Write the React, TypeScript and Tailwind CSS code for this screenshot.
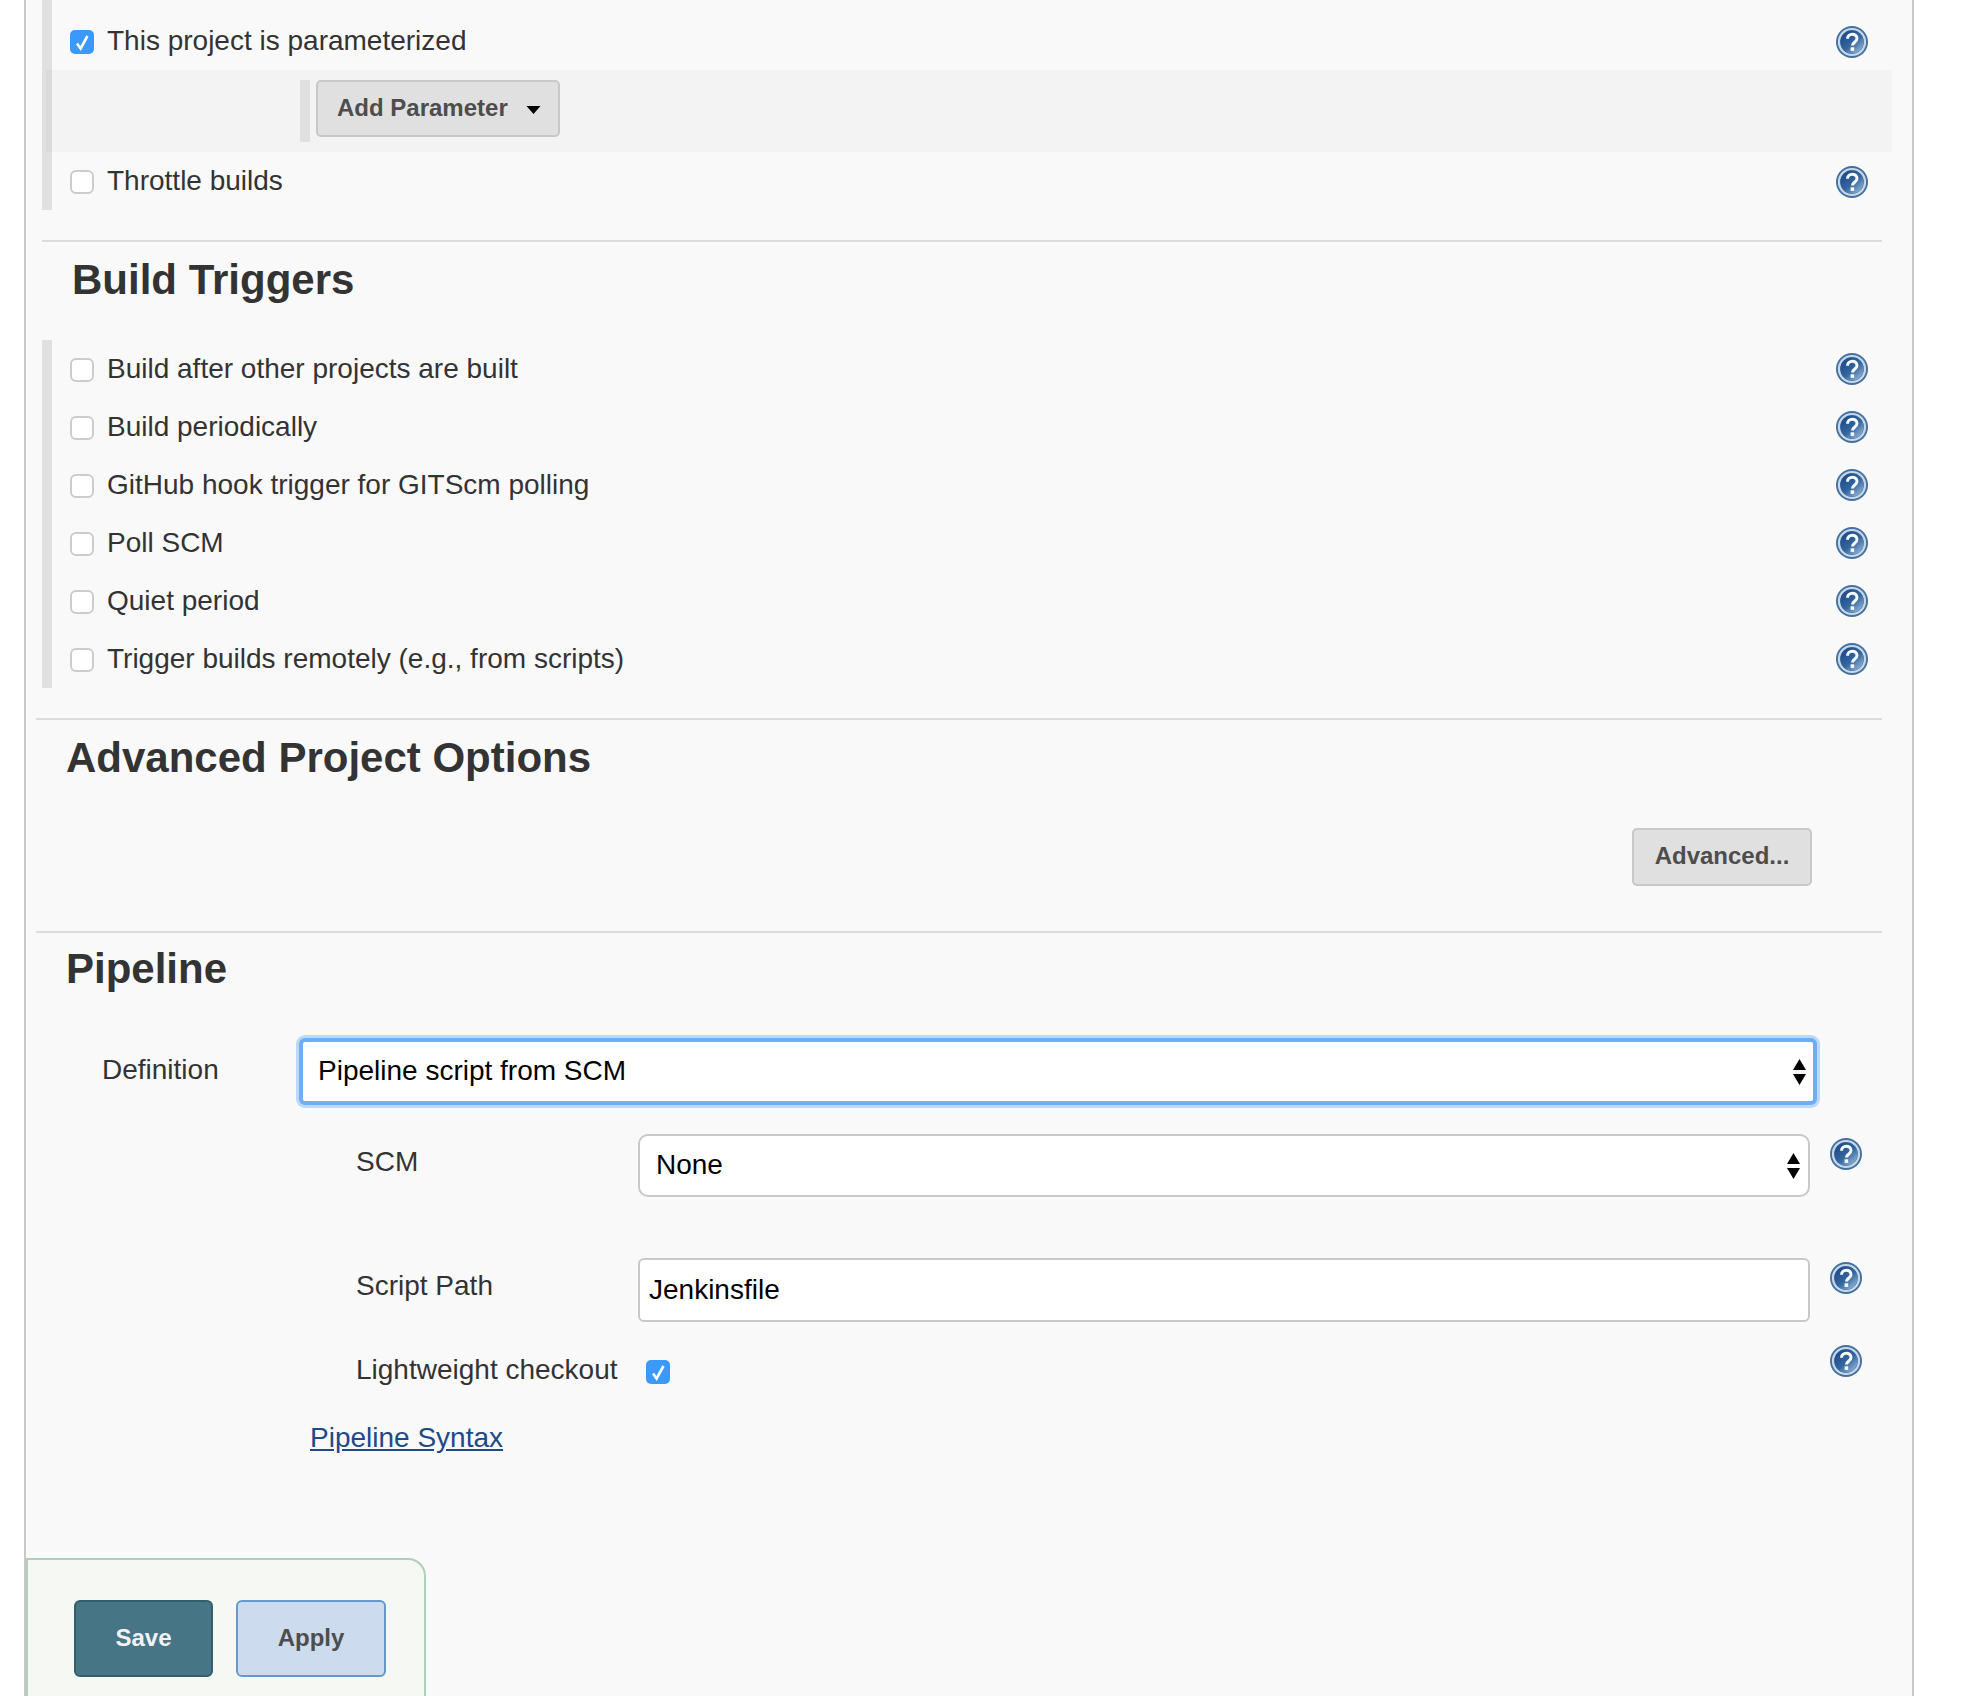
const triggers = [
  "Build after other projects are built",
  "Build periodically",
  "GitHub hook trigger for GITScm polling",
  "Poll SCM",
  "Quiet period",
  "Trigger builds remotely (e.g., from scripts)",
];

const HelpIcon = ({ id }: { id: string }) => (
  <svg viewBox="0 0 32 32" className="w-8 h-8 shrink-0 blur-[0.5px]">
    <defs>
      <linearGradient id={id} x1="0.15" y1="0.1" x2="0.85" y2="0.9">
        <stop offset="0" stopColor="#1f4c8c" />
        <stop offset="0.55" stopColor="#34669f" />
        <stop offset="1" stopColor="#8aaed3" />
      </linearGradient>
    </defs>
    <circle cx="16" cy="16" r="16" fill="#44719f" />
    <circle cx="16" cy="16" r="13" fill="none" stroke="#c9d8e8" strokeWidth="2.2" />
    <circle cx="16" cy="16" r="11.5" fill={`url(#${id})`} />
    <path d="M11.5 12.8c0-6 9.5-6 9.5-.3 0 3.6-4.6 3.8-4.6 7" fill="none" stroke="#f6f9fc" strokeWidth="3" />
    <rect x="14.6" y="21.3" width="3.6" height="3.6" fill="#f6f9fc" />
  </svg>
);

const CheckBox = ({ checked = false, className = "" }: { checked?: boolean; className?: string }) =>
  checked ? (
    <span className={`w-6 h-6 shrink-0 rounded-[5px] bg-[#3b99fc] ${className}`}>
      <svg viewBox="0 0 24 24" className="w-6 h-6">
        <path d="M7 13.5l3.6 5L17.5 6" fill="none" stroke="#fff" strokeWidth="2.6" />
      </svg>
    </span>
  ) : (
    <span className={`w-6 h-6 shrink-0 rounded-[6px] bg-white border-2 border-[#cccccc] ${className}`} />
  );

const SelectArrows = () => (
  <svg viewBox="0 0 13 26" className="w-[13px] h-[26px] shrink-0">
    <path d="M6.5 0L13 11H0zM6.5 26L0 15h13z" fill="#000" />
  </svg>
);

export default function App() {
  return (
    <div className="h-[1696px] overflow-hidden bg-white pl-6 font-['Liberation_Sans',Arial,sans-serif]">
      <div className="w-[1890px] h-full border-x-2 border-[#c8c8c8] bg-[#f9f9f9]">
        <div className="ml-4 w-[1850px] pr-6 h-[210px] border-l-[10px] border-[#e0e0e0]">
          <div className="flex items-center pl-[18px] h-[70px] pt-[14px]">
            <CheckBox checked />
            <span className="ml-[13px] -mt-[2px] flex-1 text-[28px] text-[#333]">This project is parameterized</span>
            <HelpIcon id="h0" />
          </div>
          <div className="-ml-[6px] -mr-6 h-[82px] bg-black/[0.025] flex items-start pt-[10px] pl-[254px]">
            <div className="w-[10px] h-[62px] bg-[#e0e0e0]" />
            <button className="ml-[6px] w-[244px] h-[57px] rounded-[5px] border-2 border-[#c8c8c8] bg-[#e0e0e0] text-[24px] font-bold text-[#4d4d4d] flex items-center pl-[19px] pb-[2px]">
              Add Parameter
              <svg viewBox="0 0 14 8" className="w-[15px] h-2 ml-[18px] mt-[5px]">
                <path d="M0 0h14L7 8z" fill="#000" />
              </svg>
            </button>
          </div>
          <div className="flex items-center pl-[18px] h-[60px]">
            <CheckBox />
            <span className="ml-[13px] -mt-[2px] flex-1 text-[28px] text-[#333]">Throttle builds</span>
            <HelpIcon id="h1" />
          </div>
        </div>

        <div className="ml-4 mt-[30px] w-[1840px] h-[100px] border-t-2 border-[#dcdcdc] pl-[30px] pt-[14px]">
          <h2 className="text-[42px] leading-[48px] font-bold text-[#333]">Build Triggers</h2>
        </div>
        <div className="ml-4 w-[1850px] pr-6 h-[348px] border-l-[10px] border-[#e0e0e0]">
          {triggers.map((t, i) => (
            <div key={t} className="flex items-center pl-[18px] h-[58px]">
              <CheckBox className="mt-[2px]" />
              <span className="ml-[13px] flex-1 text-[28px] text-[#333]">{t}</span>
              <HelpIcon id={`t${i}`} />
            </div>
          ))}
        </div>

        <div className="ml-[10px] mt-[30px] w-[1846px] h-[213px] border-t-2 border-[#dcdcdc] pl-[30px] pt-[14px]">
          <h2 className="text-[42px] leading-[48px] font-bold text-[#333]">Advanced Project Options</h2>
          <div className="flex justify-end pr-[70px] mt-[46px]">
            <button className="w-[180px] h-[58px] rounded-[5px] border-2 border-[#c8c8c8] bg-[#e0e0e0] text-[24px] font-bold text-[#4d4d4d] pb-[2px]">
              Advanced...
            </button>
          </div>
        </div>

        <div className="ml-[10px] w-[1846px] border-t-2 border-[#dcdcdc] pt-[12px]">
          <h2 className="pl-[30px] text-[42px] leading-[48px] font-bold text-[#333]">Pipeline</h2>

          <div className="mt-[45px] flex items-start">
            <span className="w-[263px] pl-[66px] mt-[10px] text-[28px] leading-[44px] text-[#333]">Definition</span>
            <div className="w-[1518px] h-[67px] rounded-[6px] border-[4px] border-[#6eaef5] bg-white ring-[3px] ring-[#bcd9fa] flex items-center pl-[15px] pr-[7px]">
              <span className="flex-1 pb-[2px] text-[28px] text-black">Pipeline script from SCM</span>
              <SelectArrows />
            </div>
          </div>

          <div className="mt-[29px] flex items-start">
            <span className="w-[320px]" />
            <span className="w-[282px] text-[28px] leading-[56px] text-[#333]">SCM</span>
            <div className="w-[1172px] h-[63px] rounded-[10px] border-2 border-[#c8c8c8] bg-white flex items-center pl-[16px] pr-[8px]">
              <span className="flex-1 pb-[2px] text-[28px] text-black">None</span>
              <SelectArrows />
            </div>
            <div className="ml-5 mt-1"><HelpIcon id="p0" /></div>
          </div>

          <div className="mt-[61px] flex items-start">
            <span className="w-[320px]" />
            <span className="w-[282px] text-[28px] leading-[56px] text-[#333]">Script Path</span>
            <input
              readOnly
              value="Jenkinsfile"
              className="w-[1172px] h-[64px] rounded-[6px] border-2 border-[#c8c8c8] bg-white px-[9px] text-[28px] text-black"
            />
            <div className="ml-5 mt-1"><HelpIcon id="p1" /></div>
          </div>

          <div className="mt-[24px] flex items-start">
            <span className="w-[320px]" />
            <span className="w-[290px] text-[28px] leading-[48px] text-[#333]">Lightweight checkout</span>
            <div className="mt-[14px]"><CheckBox checked className="block" /></div>
            <div className="ml-[1160px] -mt-[1px]"><HelpIcon id="p2" /></div>
          </div>

          <a href="#" className="block ml-[274px] mt-[24px] w-fit text-[28px] leading-[40px] text-[#204a87] underline">
            Pipeline Syntax
          </a>
        </div>

        <div className="mt-[100px] w-[400px] h-[200px] rounded-tr-[18px] border-t-2 border-x-2 border-[#b0cfbb] bg-[#f6f9f3] flex items-start gap-[23px] pl-[46px] pt-[40px]">
          <button className="w-[139px] h-[77px] rounded-[6px] border-2 border-[#335f6d] bg-[#467585] text-[24px] font-bold text-[#f2f2f2] pb-[2px]">
            Save
          </button>
          <button className="w-[150px] h-[77px] rounded-[6px] border-2 border-[#6699cc] bg-[#ccdbed] text-[24px] font-bold text-[#4d4d4d] pb-[2px]">
            Apply
          </button>
        </div>
      </div>
    </div>
  );
}
